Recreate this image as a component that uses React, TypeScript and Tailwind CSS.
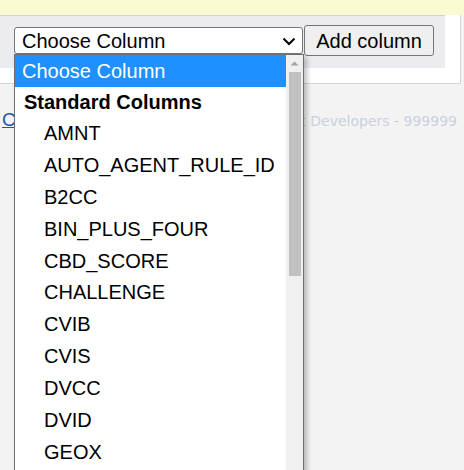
import React from 'react';

const columns = [
  'AMNT',
  'AUTO_AGENT_RULE_ID',
  'B2CC',
  'BIN_PLUS_FOUR',
  'CBD_SCORE',
  'CHALLENGE',
  'CVIB',
  'CVIS',
  'DVCC',
  'DVID',
  'GEOX',
];

const App = () => {
  return (
    <div className="relative min-h-[470px] w-[464px] overflow-hidden bg-[#f3f3f3] font-['Liberation_Sans',Arial,sans-serif]">
      {/* notice band */}
      <div className="h-[15px] bg-[#fafad2]" />

      {/* white card */}
      <div className="w-[461px] bg-white border-r border-b border-[#d6d6d6] pb-[15px]">
        <div className="w-[445px] h-[53px] bg-[#ececf0] border-t border-[#d2d2d6] flex items-start pt-[9px] pl-[14px]">
          <div className="mt-[2px] w-[289px] h-[27px] bg-white border border-[#767676] rounded-[3px] flex items-center justify-between pl-[7px] pr-[5px] text-[20px] text-black leading-none">
            <span>Choose Column</span>
            <svg width="16" height="16" viewBox="0 0 16 16" fill="none">
              <path d="M2.5 5.5 L8 11 L13.5 5.5" stroke="#000" strokeWidth="2" />
            </svg>
          </div>
          <button className="ml-[1px] w-[130px] h-[31px] bg-[#efefef] border border-[#767676] rounded-[3px] text-[20px] text-black leading-none">
            Add column
          </button>
        </div>
      </div>

      {/* footer */}
      <div className="flex items-center justify-between pl-[2px] pr-[7px] mt-[27px] h-[20px]">
        <a className="text-[#2255aa] underline text-[19px] leading-none -mt-[3px]">C</a>
        <span className="text-[#c9d1dd] font-['DejaVu_Sans',sans-serif] text-[14px]">
          Copyright © Payment Developers - 999999
        </span>
      </div>

      {/* open dropdown list */}
      <div className="absolute left-[14px] top-[54px] w-[290px] h-[430px] bg-white border border-[#6f6f6f] shadow-[3px_3px_5px_rgba(0,0,0,0.25)] flex">
        <div className="flex-1 text-[20px] text-black">
          <div className="h-[32px] bg-[#1e90ff] text-white flex items-center pl-[7px]">Choose Column</div>
          <div className="h-[30px] flex items-center pl-[9px] font-bold">Standard Columns</div>
          {columns.map((c) => (
            <div key={c} className="h-[31.9px] flex items-center pl-[29px]">
              {c}
            </div>
          ))}
        </div>
        <div className="w-[17px] bg-[#f0f0f0] flex flex-col items-center">
          <svg width="17" height="17" viewBox="0 0 17 17">
            <path d="M4.5 10.5 L8.5 6.5 L12.5 10.5 Z" fill="#a3a3a3" />
          </svg>
          <div className="w-[12px] h-[204px] bg-[#c1c1c1]" />
        </div>
      </div>
    </div>
  );
};

export default App;
